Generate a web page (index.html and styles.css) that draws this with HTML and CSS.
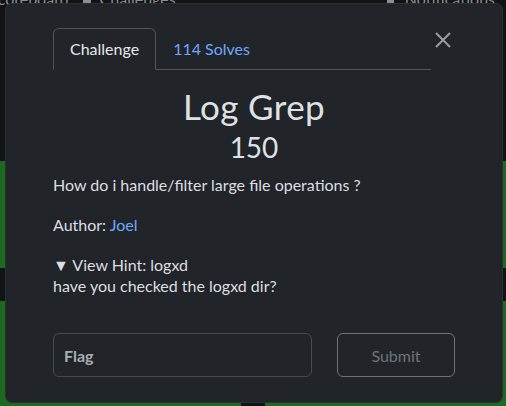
FILE: index.html
```html
<!DOCTYPE html>
<html>
<head>
<meta charset="utf-8">
<link rel="stylesheet" href="styles.css">
</head>
<body>
<div class="page">
  <div class="topbar">
    <span class="nav-left"><span>Scoreboard</span><span class="flag-icon"></span><span>Challenges</span></span>
    <span class="nav-right"><span class="bell"></span><span>Notifications</span></span>
  </div>
  <div class="cards">
    <div class="card"></div><div class="card"></div>
  </div>
  <div class="cards cards-2">
    <div class="card"></div><div class="card"></div>
  </div>
</div>

<div class="modal">
  <div class="modal-inner">
    <div class="header">
      <ul class="tabs">
        <li class="tab active">Challenge</li>
        <li class="tab link">114 Solves</li>
      </ul>
      <button class="close" aria-label="Close">
        <svg width="16" height="16" viewBox="0 0 16 16"><path d="M1 1L15 15M15 1L1 15" stroke="#9a9c9f" stroke-width="2" fill="none"/></svg>
      </button>
    </div>
    <h1 class="title">Log Grep</h1>
    <div class="points">150</div>
    <p class="desc">How do i handle/filter large file operations ?</p>
    <p class="author">Author: <a class="link">Joel</a></p>
    <div class="hint">
      <div class="hint-summary">▼ View Hint: logxd</div>
      <div class="hint-text">have you checked the logxd dir?</div>
    </div>
    <div class="submit-row">
      <div class="flag">Flag</div>
      <button class="submit">Submit</button>
    </div>
  </div>
</div>
</body>
</html>
```
FILE: styles.css
```css
* { box-sizing: border-box; }
html, body { margin: 0; padding: 0; }
body {
  background: #121315;
  font-family: Lato, "Noto Sans", sans-serif;
  width: 506px;
  height: 406px;
  overflow: hidden;
}
.page { position: relative; }
.topbar {
  height: 170px;
  display: flex;
  justify-content: space-between;
  color: #8a8d91;
  font-size: 16px;
  line-height: 16px;
  margin-top: -9px;
}
.nav-left { margin-left: -11px; display: flex; align-items: flex-start; }
.flag-icon { display: inline-block; width: 8px; height: 14px; background: #8a8d91; margin: 0 9px 0 14px; }
.nav-right { margin-right: 11px; display: flex; align-items: flex-start; gap: 11px; }
.bell { display: inline-block; width: 7px; height: 16px; background: #8a8d91; }
.cards {
  display: flex;
  gap: 24px;
  margin-left: -40px;
  margin-right: -40px;
}
.card {
  flex: 1;
  height: 107px;
  background: #1b6a1f;
}
.cards-2 { margin-top: 33px; }
.cards-2 .card { height: 120px; }

.modal {
  position: absolute;
  left: 5px;
  top: 3px;
  width: 498px;
  height: 400px;
  background: #212428;
  border: 1px solid #2c3035;
  border-radius: 7px;
}
.modal-inner {
  padding: 24px 47px 0;
  color: #dcdfe2;
}
.header {
  display: flex;
  align-items: flex-start;
}
.tabs {
  list-style: none;
  margin: 0;
  padding: 0;
  display: flex;
  width: 378px;
  border-bottom: 1px solid #50555b;
}
.tab {
  font-size: 16px;
  line-height: 20px;
  padding: 10px 16px 10px;
  margin-bottom: -1px;
  border: 1px solid transparent;
  border-top-left-radius: 6px;
  border-top-right-radius: 6px;
}
.tab.active {
  border-color: #50555b #50555b #212428;
  color: #e6e8ea;
}
.link { color: #6ea8fe; text-decoration: none; }
.close {
  margin-left: auto;
  margin-right: 4px;
  margin-top: 4px;
  background: none;
  border: 0;
  padding: 0;
  width: 16px;
  height: 16px;
  line-height: 0;
}
.title {
  margin: 16px 0 0;
  text-align: center;
  font-size: 35px;
  line-height: 40px;
  font-weight: 400;
  letter-spacing: 0.4px;
  color: #dfe2e5;
}
.points {
  text-align: center;
  font-size: 28px;
  line-height: 34px;
  margin-top: 4px;
  color: #dfe2e5;
}
.desc, .author {
  margin: 0;
  font-size: 16px;
  line-height: 24px;
}
.desc { margin-top: 9px; }
.author { margin-top: 16px; }
.hint { margin-top: 17px; font-size: 16px; line-height: 21px; }
.submit-row {
  display: flex;
  gap: 25px;
  margin-top: 37px;
}
.flag {
  width: 259px;
  height: 44px;
  border: 1px solid #464b51;
  border-radius: 6px;
  padding: 0 10px;
  display: flex;
  align-items: center;
  color: #a9adb1;
  font-size: 16px;
  font-weight: 700;
}
.submit {
  width: 118px;
  height: 44px;
  border: 1px solid #6d737a;
  border-radius: 6px;
  background: transparent;
  color: #6f757b;
  font-family: Lato, sans-serif;
  font-size: 16px;
}
```
